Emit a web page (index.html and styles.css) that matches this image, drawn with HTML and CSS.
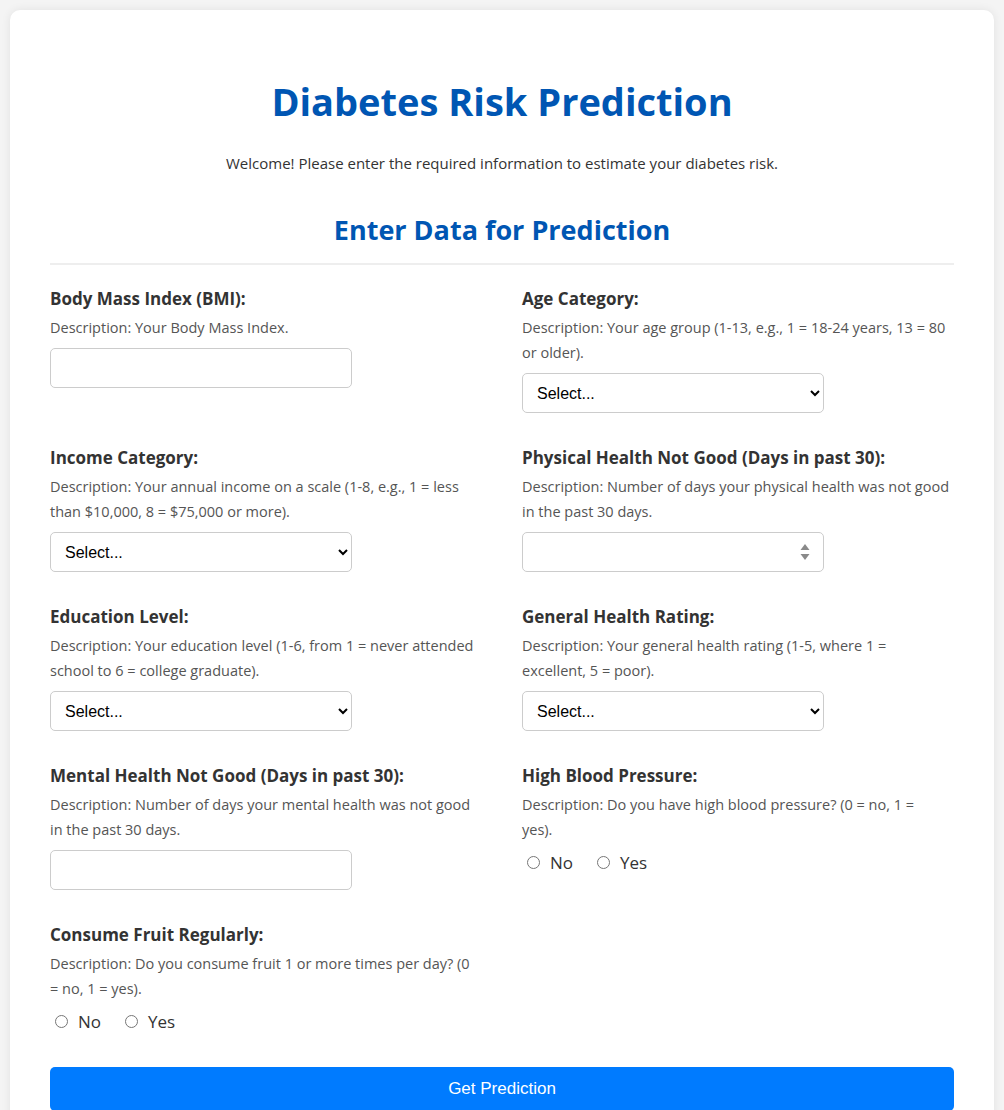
FILE: index.html
```html
<!DOCTYPE html>
<html lang="en">
<head>
<meta charset="utf-8">
<title>Diabetes Risk Prediction</title>
<link rel="stylesheet" href="styles.css">
</head>
<body>
<div class="container">
  <h1 class="title">Diabetes Risk Prediction</h1>
  <p class="intro">Welcome! Please enter the required information to estimate your diabetes risk.</p>
  <h2 class="subtitle">Enter Data for Prediction</h2>
  <form class="form-grid">
    <div class="form-group">
      <label class="field-label" for="bmi">Body Mass Index (BMI):</label>
      <p class="desc">Description: Your Body Mass Index.</p>
      <input class="field" id="bmi" type="text">
    </div>
    <div class="form-group">
      <label class="field-label" for="age">Age Category:</label>
      <p class="desc">Description: Your age group (1-13, e.g., 1 = 18-24 years, 13 = 80 or older).</p>
      <select class="field" id="age"><option>Select...</option></select>
    </div>
    <div class="form-group">
      <label class="field-label" for="income">Income Category:</label>
      <p class="desc">Description: Your annual income on a scale (1-8, e.g., 1 = less than $10,000, 8 = $75,000 or more).</p>
      <select class="field" id="income"><option>Select...</option></select>
    </div>
    <div class="form-group">
      <label class="field-label" for="phys">Physical Health Not Good (Days in past 30):</label>
      <p class="desc">Description: Number of days your physical health was not good in the past 30 days.</p>
      <div class="field-wrap">
        <input class="field" id="phys" type="text">
        <svg class="spinner" width="10" height="20" viewBox="0 0 10 20"><path d="M5 2 L9.5 8 L0.5 8 Z" fill="#8a8a8a"/><path d="M5 18 L9.5 12 L0.5 12 Z" fill="#8a8a8a"/></svg>
      </div>
    </div>
    <div class="form-group">
      <label class="field-label" for="edu">Education Level:</label>
      <p class="desc">Description: Your education level (1-6, from 1 = never attended school to 6 = college graduate).</p>
      <select class="field" id="edu"><option>Select...</option></select>
    </div>
    <div class="form-group">
      <label class="field-label" for="gen">General Health Rating:</label>
      <p class="desc">Description: Your general health rating (1-5, where 1 = excellent, 5 = poor).</p>
      <select class="field" id="gen"><option>Select...</option></select>
    </div>
    <div class="form-group">
      <label class="field-label" for="ment">Mental Health Not Good (Days in past 30):</label>
      <p class="desc">Description: Number of days your mental health was not good in the past 30 days.</p>
      <input class="field" id="ment" type="text">
    </div>
    <div class="form-group">
      <span class="field-label">High Blood Pressure:</span>
      <p class="desc desc-narrow">Description: Do you have high blood pressure? (0 = no, 1 = yes).</p>
      <div class="radios">
        <label class="radio"><input type="radio" name="bp" value="0">No</label>
        <label class="radio"><input type="radio" name="bp" value="1">Yes</label>
      </div>
    </div>
    <div class="form-group">
      <span class="field-label">Consume Fruit Regularly:</span>
      <p class="desc desc-narrow">Description: Do you consume fruit 1 or more times per day? (0 = no, 1 = yes).</p>
      <div class="radios">
        <label class="radio"><input type="radio" name="fruit" value="0">No</label>
        <label class="radio"><input type="radio" name="fruit" value="1">Yes</label>
      </div>
    </div>
    <button class="submit" type="button">Get Prediction</button>
  </form>
</div>
</body>
</html>
```
FILE: styles.css
```css
* { box-sizing: border-box; }
html, body { margin: 0; }
body {
  background: #f4f4f4;
  padding: 10px;
  font-family: "Open Sans", "Noto Sans", sans-serif;
  color: #333;
}
.container {
  background: #fff;
  border-radius: 10px;
  box-shadow: 0 0 10px rgba(0,0,0,0.08);
  padding: 40px 40px 40px;
}
.title {
  margin: 27px 0 0;
  text-align: center;
  color: #0056b3;
  font-size: 38px;
  line-height: 48px;
  font-weight: 700;
}
.intro {
  margin: 27px 0 0;
  text-align: center;
  font-size: 15px;
  line-height: 22px;
}
.subtitle {
  margin: 39px 0 0;
  text-align: center;
  color: #0056b3;
  font-size: 27px;
  line-height: 34px;
  font-weight: 700;
  padding-bottom: 16px;
  border-bottom: 2px solid #eee;
}
.form-grid {
  display: grid;
  grid-template-columns: 1fr 1fr;
  column-gap: 40px;
  row-gap: 33px;
  margin-top: 22px;
}
.form-group { display: flex; flex-direction: column; align-items: flex-start; }
.field-label {
  display: block;
  font-size: 17px;
  line-height: 23px;
  font-weight: 700;
  color: #333;
  margin-bottom: 5px;
}
.desc {
  margin: 0 0 8px;
  font-size: 14.5px;
  line-height: 25px;
  color: #555;
}
.desc-narrow { max-width: 424px; }
.field {
  width: 70%;
  height: 40px;
  border: 1px solid #ccc;
  border-radius: 5px;
  background: #fff;
  padding: 0 10px;
  font-family: "Liberation Sans", Arial, sans-serif;
  font-size: 16px;
  color: #000;
}
.field-wrap { position: relative; width: 70%; }
.field-wrap .field { width: 100%; }
.spinner { position: absolute; right: 14px; top: 10px; }
.radios { display: flex; align-items: center; height: 23px; margin-top: 1px; }
.radio {
  display: flex;
  align-items: center;
  font-size: 17px;
  color: #333;
  margin-right: 19px;
}
.radio input { margin: 0 10px 0 5px; width: 13px; height: 13px; }
.submit {
  grid-column: 1 / -1;
  height: 44px;
  border: none;
  border-radius: 5px;
  background: #007bff;
  color: #fff;
  font-family: "Liberation Sans", Arial, sans-serif;
  font-size: 17px;
  margin-top: 1px;
}
```
